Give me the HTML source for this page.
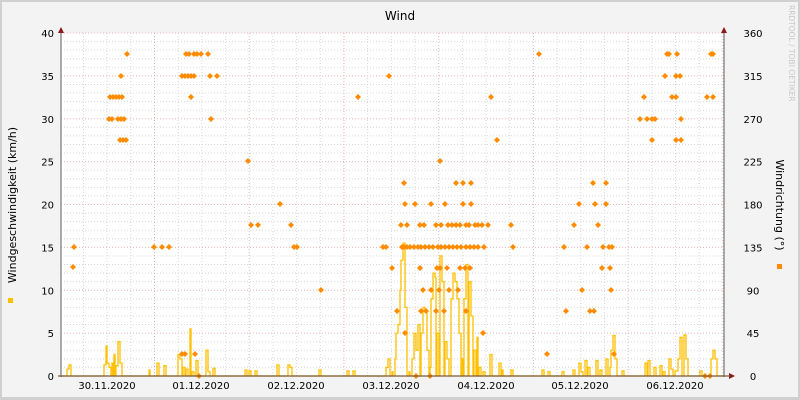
<!DOCTYPE html>
<html><head><meta charset="utf-8"><style>
html,body{margin:0;padding:0;width:800px;height:400px;overflow:hidden;background:#f3f3f3}
svg{display:block}
text{font-family:"DejaVu Sans","Liberation Sans",sans-serif;font-size:10px;fill:#000}
</style></head><body>
<svg id="s" width="800" height="400" xmlns="http://www.w3.org/2000/svg">
<rect x="0" y="0" width="800" height="400" fill="#d0d0d0"/>
<rect x="2" y="2" width="796" height="395" fill="#f3f3f3"/>
<rect x="61" y="33" width="663" height="343" fill="#ffffff"/>
<g id="grid"></g>
<g id="spd" fill="none" stroke="#ffc000" stroke-width="1.3"></g>
<g id="dir" fill="#ff8c00"></g>
<g id="ax"></g>
<text x="400" y="20" text-anchor="middle" style="font-size:12px">Wind</text>
<text transform="translate(16,205) rotate(-90)" text-anchor="middle" style="font-size:11px">Windgeschwindigkeit (km/h)</text>
<text transform="translate(776,205) rotate(90)" text-anchor="middle" style="font-size:11px">Windrichtung (°)</text>
<text transform="translate(789,5) rotate(90)" style="font-size:7.5px;fill:#c8c8c8">RRDTOOL / TOBI OETIKER</text>
<rect x="8" y="298" width="5" height="5" fill="#ffc000"/>
<rect x="777" y="264" width="5" height="5" fill="#ff8c00"/>
<text x="107" y="389" text-anchor="middle">30.11.2020</text>
<text x="201" y="389" text-anchor="middle">01.12.2020</text>
<text x="296" y="389" text-anchor="middle">02.12.2020</text>
<text x="391" y="389" text-anchor="middle">03.12.2020</text>
<text x="486" y="389" text-anchor="middle">04.12.2020</text>
<text x="580" y="389" text-anchor="middle">05.12.2020</text>
<text x="675" y="389" text-anchor="middle">06.12.2020</text>
</svg>
<script>
var NS="http://www.w3.org/2000/svg";
function el(p,t,a){var e=document.createElementNS(NS,t);for(var k in a)e.setAttribute(k,a[k]);document.getElementById(p).appendChild(e);return e;}
function Y(v){return 376-v*343/40;}
for(var i=1;i<=40;i++){var y=Y(i);var maj=i%5==0;
 el("grid","line",{x1:61,x2:724,y1:y,y2:y,stroke:maj?"#e8b4b4":"#d8d8d8","stroke-width":1,"stroke-dasharray":"1,2"});}
for(var x=59.8+23.68;x<724;x+=23.68){var d=Math.round((x-59.8)/23.68)%4==0;
 el("grid","line",{x1:x,x2:x,y1:33,y2:376,stroke:d?"#e8b4b4":"#d8d8d8","stroke-width":1,"stroke-dasharray":"1,2"});}
el("ax","line",{x1:61,x2:61,y1:30,y2:377,stroke:"#777","stroke-width":1.2});
el("ax","line",{x1:724,x2:724,y1:30,y2:377,stroke:"#777","stroke-width":1.2});
el("ax","polygon",{points:"58,33 64,33 61,27",fill:"#8b1a1a"});
el("ax","polygon",{points:"721,33 727,33 724,27",fill:"#8b1a1a"});
el("ax","polygon",{points:"729,373 729,379 735,376",fill:"#8b1a1a"});
for(var i=0;i<=8;i++){var t=el("ax","text",{x:54,y:Y(i*5)+4,"text-anchor":"end"});t.textContent=i*5;
 var t2=el("ax","text",{x:753,y:Y(i*5)+4,"text-anchor":"middle"});t2.textContent=i*45;}
var P=[[67,69,0.8],[69,71,1.3],[104,106,1.3],[106,107,3.5],[107,109,1.5],[109,111,1],[112,113,1.5],[114,115,2.5],[116,118,1.2],[118,120,4.0],[120,122,1.5],[149,150,0.7],[157,159,1.5],[164,166,1.2],[178,180,2.5],[180,182,2],[183,185,1],[186,188,0.8],[190,191,5.5],[192,194,0.5],[196,198,1.8],[206,208,3],[208,210,0.5],[213,215,0.9],[245,247,0.7],[249,251,0.6],[255,257,0.6],[277,279,1.3],[288,290,1.3],[290,292,1],[319,321,0.7],
[347,349,0.6],[353,355,0.6],[386,388,1],[388,390,2],[392,393,0.5],[395,396,2],[396,398,5],[398,400,6],[400,401,10],[401,403,13.5],[403,405,15.5],[405,407,8],[409,410,0.5],[412,414,2],[414,416,5],[416,418,3],[418,420,6],[421,423,5],[423,425,8],[425,427,7.5],[427,429,3],[430,431,1],[431,433,9],[433,435,12],[435,436,11.5],[437,439,5],[440,442,14],[442,444,11],[445,447,4],[447,449,2],[451,453,9],[453,455,12],[455,457,11],[457,459,9],[459,461,5],[462,463,2],[464,466,9],[466,468,13],[469,471,11],[471,473,7],[474,476,3],[477,478,4.5],[479,481,1],[483,485,0.5],[490,492,2.5],[499,501,1.5],[502,503,0.7],[511,513,0.7],
[542,544,0.7],[548,550,0.5],[562,564,0.5],[573,575,0.7],[579,581,1.5],[581,583,0.5],[585,587,1.8],[588,590,1],[596,598,1.8],[600,602,0.7],[606,608,2],[610,611,1],[611,613,3],[613,615,4.7],[615,617,2],[622,624,0.6],[645,647,1.5],[648,650,1.8],[654,656,1],[660,662,1.2],[663,665,0.5],[669,671,2],[671,673,0.8],[675,678,0.6],[678,680,2],[680,682,4.5],[684,686,4.8],[686,688,2],[700,702,0.6],[711,713,2],[713,715,3],[715,717,2]];
var d="M61,376",prev=61;
P.forEach(function(p){var y=Y(p[2]);
 if(p[0]>prev){d+=" L"+prev+",376 L"+p[0]+",376";}
 d+=" L"+p[0]+","+y+" L"+p[1]+","+y;prev=p[1];});
d+=" L"+prev+",376 L724,376";
el("spd","path",{d:d,"stroke-linejoin":"miter"});
el("ax","line",{x1:58,x2:730,y1:376,y2:376,stroke:"#7a5a3a","stroke-width":1.2});
var D=[[74,247],[73,267],[110,97],[113,97],[116,97],[119,97],[122,97],[109,119],[112,119],[118,119],[121,119],[124,119],[120,140],[123,140],[126,140],[121,76],[127,54],
[154,247],[162,247],[169,247],[186,54],[189,54],[194,54],[197,54],[201,54],[208,54],[182,76],[185,76],[188,76],[191,76],[194,76],[210,76],[217,76],[191,97],[211,119],[182,354],[185,354],[195,354],[199,376],
[248,161],[251,225],[258,225],[280,204],[291,225],[294,247],[297,247],[321,290],[358,97],[389,76],
[383,247],[386,247],[392,268],[397,311],[405,333],[416,376],[430,376],[426,311],[421,311],[436,311],[444,311],[466,311],[483,333],
[401,225],[404,183],[405,204],[407,225],[415,204],[420,225],[424,225],[431,204],[436,225],[441,225],[445,204],[448,225],[452,225],[456,225],[460,225],[463,204],[466,225],[469,225],[471,204],[475,225],[478,225],[482,225],[488,225],[456,183],[463,183],[471,183],[440,161],
[402,247],[404,247],[407,247],[410,247],[414,247],[418,247],[421,247],[425,247],[429,247],[433,247],[438,247],[441,247],[445,247],[449,247],[453,247],[457,247],[461,247],[466,247],[470,247],[474,247],[478,247],[484,247],
[420,268],[437,268],[440,268],[447,268],[460,268],[465,268],[470,268],[423,290],[439,290],[449,290],[458,290],[431,290],
[491,97],[497,140],[511,225],[513,247],[539,54],[547,354],
[564,247],[566,311],[574,225],[579,204],[582,290],[587,247],[590,311],[594,311],[593,183],[595,204],[598,225],[603,247],[606,204],[606,183],[602,268],[609,247],[612,247],[610,268],[611,290],[614,354],
[640,119],[644,97],[647,119],[652,140],[652,119],[655,119],[665,76],[667,54],[669,54],[677,54],[672,97],[676,97],[676,76],[680,76],[676,140],[681,140],[681,119],[711,54],[713,54],[707,97],[713,97],[705,376],[710,376]];
D.forEach(function(p){var x=p[0],y=p[1];el("dir","polygon",{points:(x-3)+","+y+" "+x+","+(y-3)+" "+(x+3)+","+y+" "+x+","+(y+3)});});
</script>
</body></html>
